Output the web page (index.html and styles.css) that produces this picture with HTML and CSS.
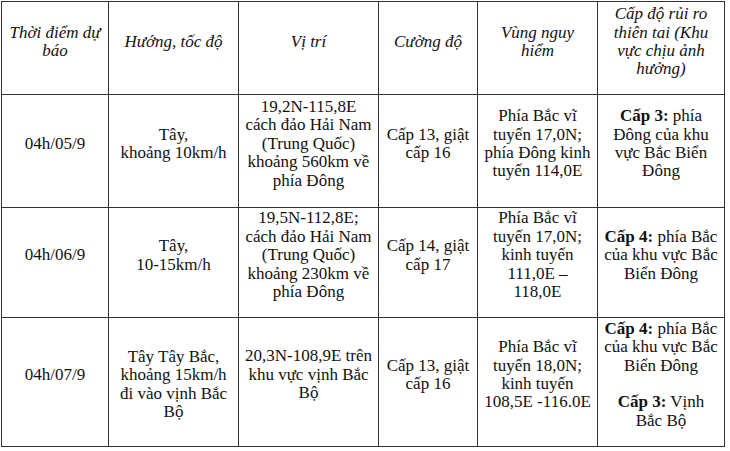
FILE: index.html
```html
<!DOCTYPE html>
<html lang="vi">
<head>
<meta charset="utf-8">
<title>Dự báo bão</title>
<link rel="stylesheet" href="styles.css">
</head>
<body>
<div class="wrap">
<table class="forecast">
  <colgroup>
    <col class="c1"><col class="c2"><col class="c3"><col class="c4"><col class="c5"><col class="c6">
  </colgroup>
  <thead>
    <tr class="r-head">
      <th>Thời điểm dự<br>báo</th>
      <th>Hướng, tốc độ</th>
      <th>Vị trí</th>
      <th>Cường độ</th>
      <th>Vùng nguy<br>hiểm</th>
      <th>Cấp độ rủi ro<br>thiên tai (Khu<br>vực chịu ảnh<br>hưởng)</th>
    </tr>
  </thead>
  <tbody>
    <tr class="r1">
      <td>04h/05/9</td>
      <td>Tây,<br>khoảng 10km/h</td>
      <td>19,2N-115,8E<br>cách đảo Hải Nam<br>(Trung Quốc)<br>khoảng 560km về<br>phía Đông</td>
      <td>Cấp 13, giật<br>cấp 16</td>
      <td>Phía Bắc vĩ<br>tuyến 17,0N;<br>phía Đông kinh<br>tuyến 114,0E</td>
      <td><b>Cấp 3:</b> phía<br>Đông của khu<br>vực Bắc Biển<br>Đông</td>
    </tr>
    <tr class="r2">
      <td>04h/06/9</td>
      <td>Tây,<br>10-15km/h</td>
      <td>19,5N-112,8E;<br>cách đảo Hải Nam<br>(Trung Quốc)<br>khoảng 230km về<br>phía Đông</td>
      <td>Cấp 14, giật<br>cấp 17</td>
      <td>Phía Bắc vĩ<br>tuyến 17,0N;<br>kinh tuyến<br>111,0E –<br>118,0E</td>
      <td><b>Cấp 4:</b> phía Bắc<br>của khu vực Bắc<br>Biển Đông</td>
    </tr>
    <tr class="r3">
      <td>04h/07/9</td>
      <td class="low">Tây Tây Bắc,<br>khoảng 15km/h<br>đi vào vịnh Bắc<br>Bộ</td>
      <td>20,3N-108,9E trên<br>khu vực vịnh Bắc<br>Bộ</td>
      <td>Cấp 13, giật<br>cấp 16</td>
      <td>Phía Bắc vĩ<br>tuyến 18,0N;<br>kinh tuyến<br>108,5E -116.0E</td>
      <td><p class="para"><b>Cấp 4:</b> phía Bắc<br>của khu vực Bắc<br>Biển Đông</p><p class="para gap"><b>Cấp 3:</b> Vịnh<br>Bắc Bộ</p></td>
    </tr>
  </tbody>
</table>
</div>
</body>
</html>
```

FILE: styles.css
```css
html, body {
  margin: 0;
  padding: 0;
  background: #fff;
}

.wrap {
  padding: 1px 0 0 1px;
}

.forecast {
  border-collapse: collapse;
  table-layout: fixed;
  width: 723px;
  font-family: "Liberation Serif", "Times New Roman", serif;
  font-size: 17px;
  line-height: 18.4px;
  color: #111;
}

.c1 { width: 107px; }
.c2 { width: 130px; }
.c3 { width: 140px; }
.c4 { width: 99px; }
.c5 { width: 120px; }
.c6 { width: 127px; }

.forecast th,
.forecast td {
  border: 1px solid #333;
  text-align: center;
  vertical-align: middle;
  padding: 0 1px 14px;
  white-space: nowrap;
}

.forecast th {
  font-style: italic;
  font-weight: normal;
  padding-bottom: 12px;
}

.r-head { height: 93px; }
.r1 { height: 113px; }
.r2 { height: 110px; }
.r3 { height: 129px; }

.forecast td.low {
  padding-top: 19px;
}

.para {
  margin: 0;
}

.para.gap {
  margin-top: 18.4px;
}
```
